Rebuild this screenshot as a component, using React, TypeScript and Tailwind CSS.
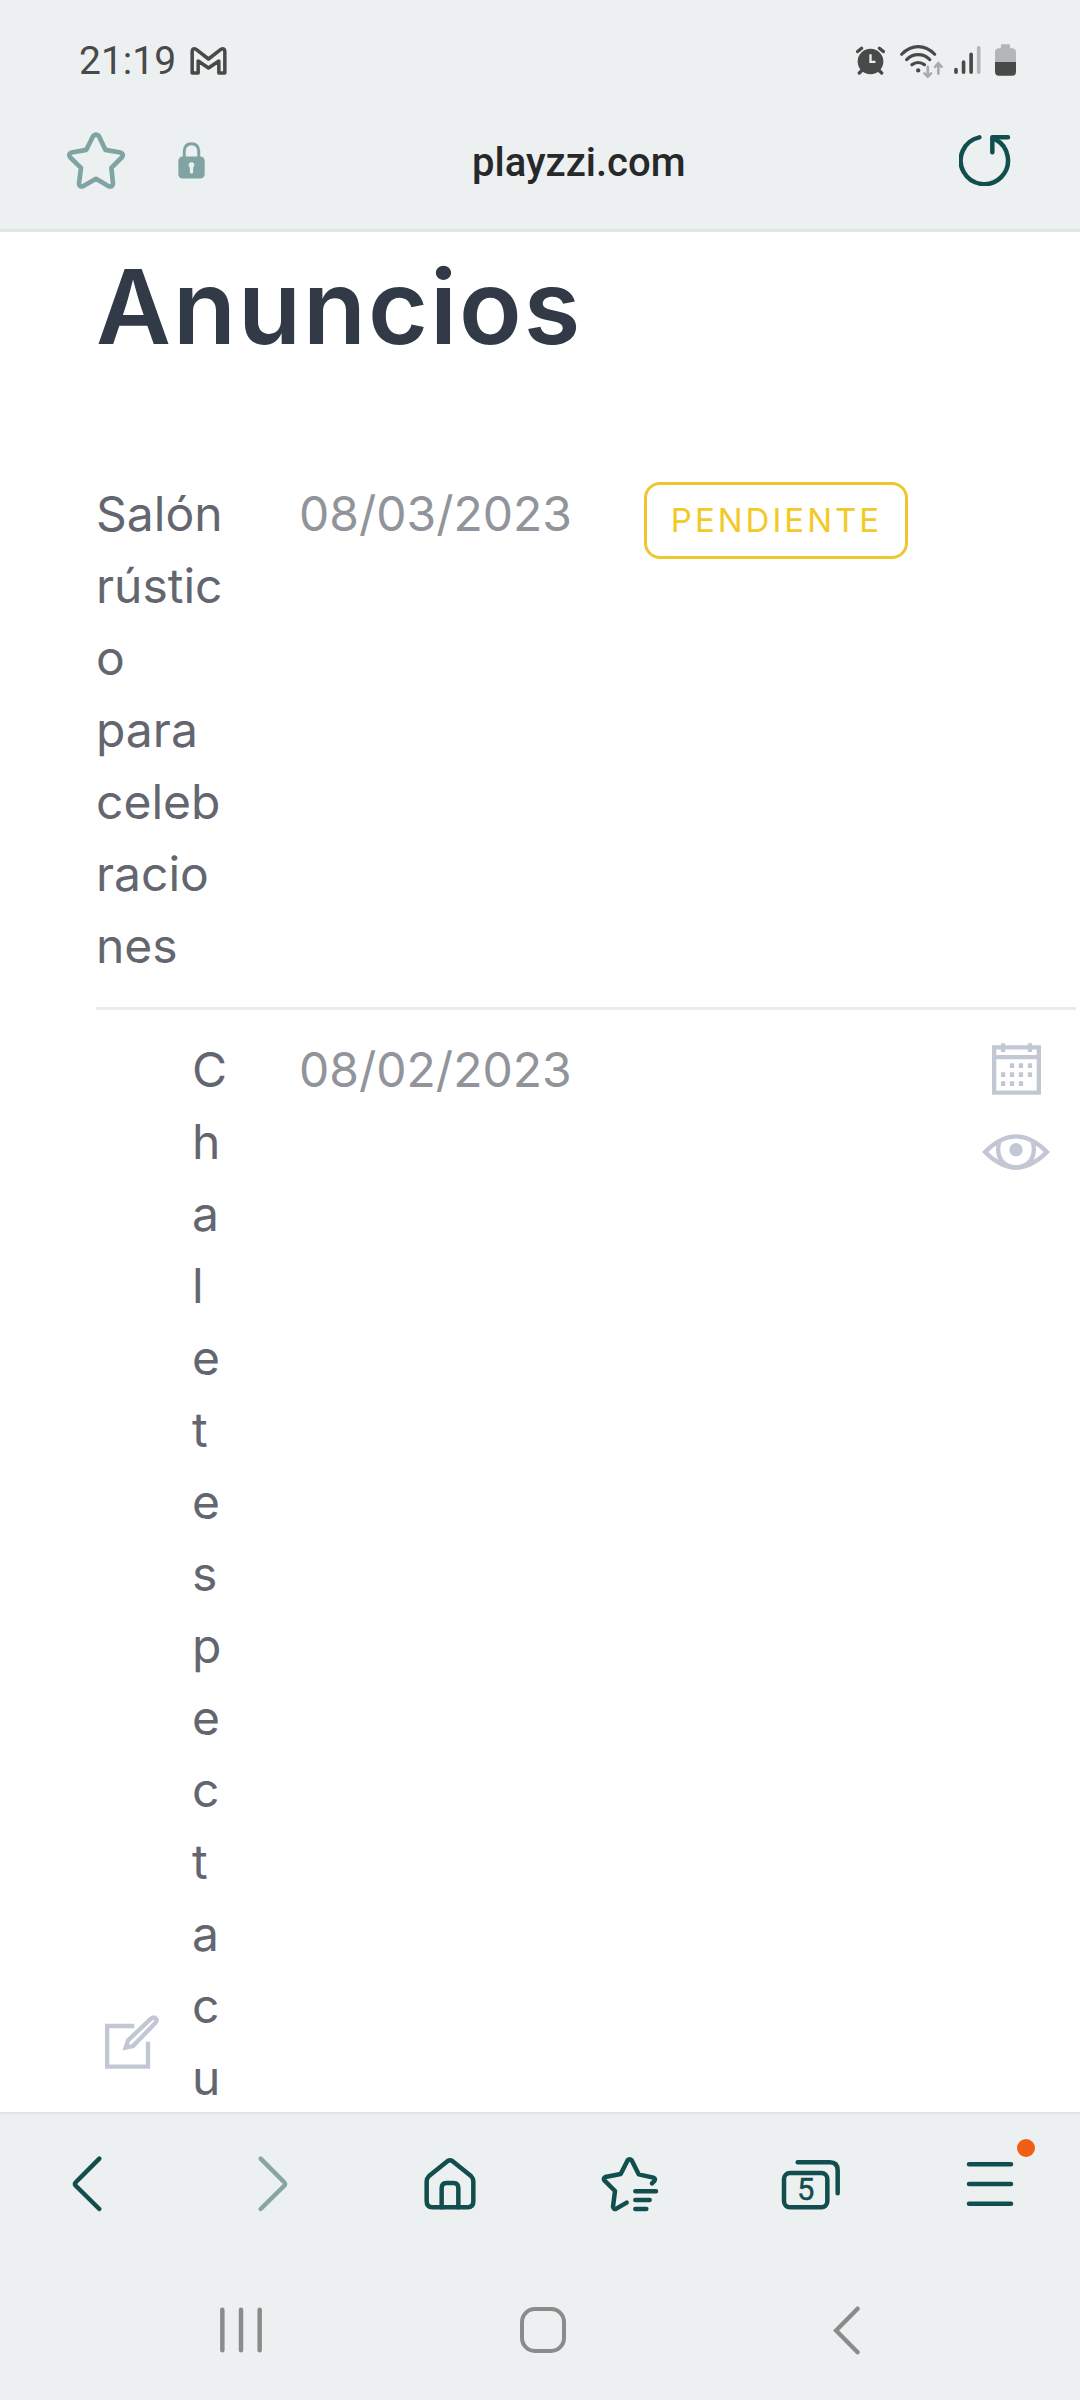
import type { ReactNode } from 'react';

function ToolbarButton({ label, children, className = 'text-[#124e4e]' }: { label: string; children: ReactNode; className?: string }) {
  return (
    <button aria-label={label} className="relative flex items-center justify-center">
      <svg viewBox="0 0 180 180" className={`h-[60px] w-[60px] ${className}`} fill="none" stroke="currentColor" strokeWidth={13.5} strokeLinecap="round" strokeLinejoin="round">
        {children}
      </svg>
      {label === 'Pestañas' && (
        <span className="absolute left-[77px] top-[58px] text-[31px] leading-[36px] text-[#124e4e] [-webkit-text-stroke:0.4px_#124e4e]">5</span>
      )}
      {label === 'Menú' && <span className="absolute left-[117px] top-[25px] h-[18px] w-[18px] rounded-full bg-[#f05f14]" />}
    </button>
  );
}

function StatusBar() {
  return (
    <div className="flex h-[120px] items-center pl-[79px] pr-[64px] text-[#484949]">
      <span className="mt-[2px] w-[96px] text-[39px] leading-none">21:19</span>
      <svg viewBox="0 0 110 84" className="ml-[15px] mt-px h-[28px] w-[37px]" fill="none" stroke="currentColor" strokeWidth={10.5} strokeLinejoin="round">
        <path d="M6 14Q6 2 18 7L55 36L92 7Q104 2 104 14V78H86V42L55 63L24 42V78H6Z" />
      </svg>

      <svg viewBox="0 0 88 86" className="ml-auto h-[29px] w-[29px]" fill="none" stroke="currentColor" strokeLinecap="round">
        <circle cx="44" cy="46" r="39" fill="currentColor" stroke="none" />
        <path d="M5 16L17 6M71 6L83 16M17 74L10 81M71 74L78 81" strokeWidth={10} />
        <path d="M44 24V47H59" stroke="#ecf0f1" strokeWidth={7} strokeLinecap="butt" />
      </svg>
      <svg viewBox="0 0 130 100" className="ml-[15px] mt-[2px] h-[33px] w-[43px]" fill="none" stroke="currentColor" strokeWidth={9.5} strokeLinecap="round">
        <path d="M5 28Q28 5 55 5T105 28M20 44Q35 29 55 29T90 44M36 60Q44 53 55 53T74 60" />
        <circle cx="55" cy="77" r="6.5" fill="currentColor" stroke="none" />
        <path d="M84 66V95M74 86L84 96L94 86M116 87V56M106 66L116 55L126 66" stroke="#a9acac" strokeWidth={8} />
      </svg>
      <svg viewBox="0 0 82 90" className="ml-[11px] h-[30px] w-[27px]" fill="none" stroke="currentColor" strokeWidth={11} strokeLinecap="round">
        <path d="M6 74V82M29 51V82M52 28V82" />
        <path d="M75 8V82" stroke="#b3b6b6" />
      </svg>
      <svg viewBox="0 0 64 96" className="ml-[14px] h-[32px] w-[21px]">
        <path d="M18 4Q18 0 22 0H42Q46 0 46 4V12H54Q64 14 64 24V54H0V24Q0 14 10 12H18Z" fill="#b3b6b6" />
        <path d="M0 54H64V84Q64 96 52 96H12Q0 96 0 84Z" fill="currentColor" />
      </svg>
    </div>
  );
}

function AddressBar() {
  return (
    <div className="flex h-[80px] items-center pl-[67px] pr-[69px]">
      <svg viewBox="0 0 174 170" className="h-[57px] w-[58px] text-[#80a3a3]" fill="none" stroke="currentColor" strokeWidth={14} strokeLinejoin="round">
        <path d="M78 12Q87 3 96 12L115 53L160 61Q173 66 164 76L133 107L138 154Q137 166 125 162L87 140L48 162Q36 166 36 154L42 107L10 76Q2 65 14 61L58 53Z" />
      </svg>
      <svg viewBox="0 0 82 112" className="ml-[53px] h-[37px] w-[27px] text-[#80a3a3]">
        <path d="M19 48V28Q20 5 41 5T63 28V48" fill="none" stroke="currentColor" strokeWidth={9} />
        <rect x="1" y="44" width="80" height="67" rx="13" fill="currentColor" />
        <path d="M41 70V91" stroke="#ecf0f1" strokeWidth={10} strokeLinecap="round" />
        <circle cx="41" cy="70" r="8.5" fill="#ecf0f1" />
      </svg>
      <span className="ml-[267px] mt-[6px] text-[40px] font-medium leading-none text-[#272829]">playzzi.com</span>
      <svg viewBox="0 0 156 156" className="ml-auto h-[52px] w-[52px] text-[#124e4e]" fill="none" stroke="currentColor" strokeWidth={13.5} strokeLinecap="round" strokeLinejoin="round">
        <path d="M61 10A71 71 0 1 0 108 16" />
        <path d="M147 10H100V55" />
      </svg>
    </div>
  );
}

function CalendarIcon() {
  return (
    <svg viewBox="0 0 148 156" className="h-[52px] w-[49px]">
      <path d="M6.5 12.5H141.5V149.5H6.5ZM6 42H142" fill="none" stroke="currentColor" strokeWidth={13} />
      <path d="M27 0H40V27H27ZM108 0H121V27H108Z" fill="currentColor" />
      <path d="M54 68H121M27 95H121M27 122H94" stroke="currentColor" strokeWidth={14} strokeDasharray="13 14" />
    </svg>
  );
}

function EyeIcon() {
  return (
    <svg viewBox="0 0 204 108" className="h-[36px] w-[68px]" fill="none" stroke="currentColor" strokeWidth={13}>
      <path d="M9 54Q56 7 102 7T195 54Q148 101 102 101T9 54Z" />
      <path d="M53 20Q45 42 51 64Q61 98 102 101Q143 98 153 64Q159 42 151 20" />
      <circle cx="102" cy="47" r="20" fill="currentColor" stroke="none" />
    </svg>
  );
}

function EditIcon() {
  return (
    <svg viewBox="0 0 162 162" className="h-[54px] w-[54px]" fill="none" stroke="currentColor" strokeWidth={13}>
      <path d="M88 33H6.5V155H129V80" />
      <path d="M62 98L69 76L138 11Q146 4 152 10T151 24L84 93Z" />
    </svg>
  );
}

function Listings() {
  return (
    <main className="h-[1880px] overflow-hidden pl-[96px] pr-[4px] text-[48px] leading-[72px] text-[#63666f] font-[Inter,sans-serif]">
      <h1 className="pt-[12px] text-[103px] font-semibold leading-[125px] tracking-[2px] text-[#323a47]">Anuncios</h1>

      <div className="mt-[109px] flex items-start border-b-[3px] border-[#ebebee] pb-[25px]">
        <p className="w-[128px] break-words">Salón rústico para celebraciones</p>
        <time className="ml-[75px] w-[345px] text-[#92949b]">08/03/2023</time>
        <span className="mt-[4px] flex h-[77px] w-[264px] items-center justify-center rounded-[16px] border-[3px] border-[#efc62f] pl-px text-[33px] leading-none tracking-[3px] text-[#f3c925]">
          PENDIENTE
        </span>
      </div>

      <div className="flex items-start pt-[24px]">
        <button aria-label="Editar" className="ml-[9px] mt-[981px] text-[#c1c8d4]">
          <EditIcon />
        </button>
        <p className="ml-[33px] w-[30px] break-words">Chalet espectacu</p>
        <time className="ml-[77px] text-[#92949b]">08/02/2023</time>
        <div className="ml-auto mr-[26px] mt-[9px] flex flex-col items-center gap-[39px] text-[#c1c8d4]">
          <CalendarIcon />
          <EyeIcon />
        </div>
      </div>
    </main>
  );
}

function Toolbar() {
  return (
    <nav className="grid h-[142px] grid-cols-6 border-t-2 border-[#e0e2e4]">
      <ToolbarButton label="Atrás">
        <path d="M118 14L48 84Q42 90 48 96L118 165" />
      </ToolbarButton>
      <ToolbarButton label="Adelante" className="text-[#86a6a6]">
        <path d="M62 14L132 84Q138 90 132 96L62 165" />
      </ToolbarButton>
      <ToolbarButton label="Inicio">
        <path d="M83 21Q90 17 97 21L153 66Q160 73 160 82V142Q160 160 143 160H37Q20 160 20 142V82Q20 73 27 66Z" />
        <path d="M65 160V103Q65 87 79 87H101Q115 87 115 103V160" />
      </ToolbarButton>
      <ToolbarButton label="Marcadores">
        <path d="M156 88L163 81Q168 74 160 71L116 61L95 19Q89 12 83 19L62 60L16 69Q8 73 14 80L45 111L39 158Q41 168 49 164L80 146M106 112H168M106 138H149M106 165H139" />
      </ToolbarButton>
      <ToolbarButton label="Pestañas">
        <rect x="12" y="57" width="130" height="103" rx="18" />
        <path d="M53 25H149Q173 25 173 49V118" />
      </ToolbarButton>
      <ToolbarButton label="Menú">
        <path d="M27 31H153M27 90H153M27 149H153" />
      </ToolbarButton>
    </nav>
  );
}

function SystemNav() {
  return (
    <div className="flex h-[146px] items-center pl-[220px] pt-[6px] text-[#8a8b8b]">
      <svg viewBox="0 0 126 138" className="h-[46px] w-[42px]" fill="none" stroke="currentColor" strokeWidth={13.5} strokeLinecap="round">
        <path d="M7 8V130M63 8V130M119 8V130" />
      </svg>
      <div className="ml-[258px] h-[46px] w-[46px] rounded-[15px] border-4 border-current" />
      <svg viewBox="0 0 80 146" className="ml-[267px] h-[49px] w-[27px]" fill="none" stroke="currentColor" strokeWidth={13} strokeLinecap="round">
        <path d="M73 8L9 73L73 138" />
      </svg>
    </div>
  );
}

export default function App() {
  return (
    <div className="h-[2400px] w-[1080px] overflow-hidden bg-white font-[Roboto,sans-serif]">
      <header className="h-[232px] border-b-[3px] border-[#e3e4e6] bg-[#ecf0f1]">
        <StatusBar />
        <AddressBar />
      </header>
      <Listings />
      <footer className="bg-[#ecf0f1]">
        <Toolbar />
        <SystemNav />
      </footer>
    </div>
  );
}
